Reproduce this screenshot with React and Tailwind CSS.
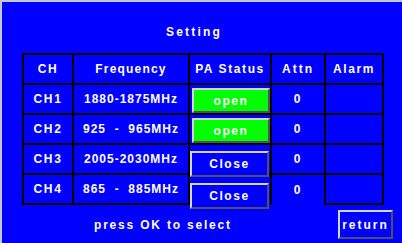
import React from 'react'

const rows = [
  { ch: 'CH1', freq: '1880-1875MHz', status: 'open', attn: '0' },
  { ch: 'CH2', freq: '925  -  965MHz', status: 'open', attn: '0' },
  { ch: 'CH3', freq: '2005-2030MHz', status: 'Close', attn: '0' },
  { ch: 'CH4', freq: '865  -  885MHz', status: 'Close', attn: '0' },
]

const cell = 'flex items-center justify-center border-r-2 border-b-2 border-black whitespace-pre'

const StatusButton = ({ status, last, idx }) => {
  const isOpen = status === 'open'
  return (
    <div
      className={`
        relative z-10 shrink-0 flex items-center justify-center
        border-2 border-t-[#d4d4d4] border-l-[#d4d4d4] border-b-[#505060] border-r-[#505060]
        ${isOpen ? 'w-[78px] h-[25px] bg-[#00ff00] ml-[2px] mt-[3px]' : 'w-[79px] h-[26px] bg-[#0000ff]'}
        ${!isOpen && idx === 2 ? 'mt-[6px]' : ''}
        ${!isOpen && last ? 'mt-[8px]' : ''}
      `}
    >
      {status}
    </div>
  )
}

export default function App() {
  return (
    <div className="w-[402px] h-[243px] bg-[#c8c8c8] pt-[2px] pl-[2px] overflow-hidden">
      <div
        className="w-full h-full bg-[#0000ff] text-white font-bold text-[12px] tracking-[1.6px] flex flex-col"
        style={{ fontFamily: '"Liberation Sans", Arial, sans-serif' }}
      >
        {/* TITLE */}
        <div className="pt-[23px] pl-[164px] h-[37px] leading-[14px] tracking-[2.2px]">
          Setting
        </div>

        {/* TABLE */}
        <div className="mt-[14px] ml-[20px] grid grid-cols-[50px_116px_82px_54px_58px] auto-rows-[30px] w-[362px] border-l-2 border-t-2 border-black">
          <div className={cell}>CH</div>
          <div className={`${cell} tracking-[1.2px]`}>Frequency</div>
          <div className={cell}>PA Status</div>
          <div className={`${cell} tracking-[2px]`}>Attn</div>
          <div className={cell}>Alarm</div>

          {rows.map((r, i) => {
            const last = i === rows.length - 1
            return (
              <React.Fragment key={r.ch}>
                <div className={cell}>{r.ch}</div>
                <div className={`${cell} tracking-[1px]`}>{r.freq}</div>
                <div className={`flex items-start justify-start border-r-2 border-black ${last ? '' : 'border-b-2'}`}>
                  <StatusButton status={r.status} last={last} idx={i} />
                </div>
                <div className={`flex items-center justify-center border-r-2 border-black ${last ? '' : 'border-b-2'}`}>
                  {r.attn}
                </div>
                <div className={cell}></div>
              </React.Fragment>
            )
          })}
        </div>

        {/* FOOTER */}
        <div className="mt-[5px] flex items-center justify-between pl-[92px] pr-[9px]">
          <span className="tracking-[1.8px]">press OK to select</span>
          <div className="w-[55px] h-[29px] flex items-center justify-center border-2 border-t-[#d4d4d4] border-l-[#d4d4d4] border-b-[#505060] border-r-[#505060] tracking-[2px]">
            return
          </div>
        </div>
      </div>
    </div>
  )
}
